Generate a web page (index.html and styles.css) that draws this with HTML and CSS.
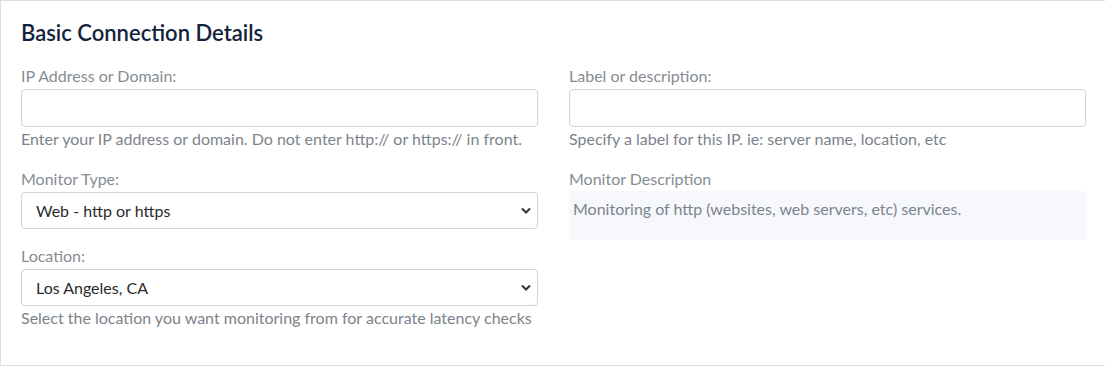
FILE: index.html
```html
<!DOCTYPE html>
<html lang="en">
<head>
  <meta charset="UTF-8" />
  <title>Basic Connection Details</title>
  <link rel="stylesheet" href="styles.css">
</head>
<body>
  <div class="card">
    <h2 class="card-title">Basic Connection Details</h2>

    <div class="form-grid">
      <!-- left column -->
      <div class="col">
        <div class="field">
          <label for="host">IP Address or Domain:</label>
          <input type="text" id="host" class="form-control">
          <small class="help">Enter your IP address or domain. Do not enter http:// or https:// in front.</small>
        </div>

        <div class="field">
          <label for="type">Monitor Type:</label>
          <select id="type" class="form-control">
            <option>Web - http or https</option>
          </select>
        </div>

        <div class="field">
          <label for="location">Location:</label>
          <select id="location" class="form-control">
            <option>Los Angeles, CA</option>
          </select>
          <small class="help">Select the location you want monitoring from for accurate latency checks</small>
        </div>
      </div>

      <!-- right column -->
      <div class="col">
        <div class="field">
          <label for="label">Label or description:</label>
          <input type="text" id="label" class="form-control">
          <small class="help">Specify a label for this IP. ie: server name, location, etc</small>
        </div>

        <div class="field">
          <label class="plain">Monitor Description</label>
          <div class="desc-box">Monitoring of http (websites, web servers, etc) services.</div>
        </div>
      </div>
    </div>
  </div>
</body>
</html>
```

FILE: styles.css
```css
body {
  margin: 0;
  font-family: Lato, "Open Sans", sans-serif;
  background: #fff;
  overflow: hidden;
}

.card {
  width: 1106px;
  height: 366px;
  box-sizing: border-box;
  border: 1px solid #dcdcdc;
  padding: 18px 20px 0 20px;
}

.card-title {
  margin: 0 0 18px;
  font-size: 22px;
  font-weight: 600;
  color: #14233c;
  line-height: 28px;
}

.form-grid {
  display: grid;
  grid-template-columns: 517px 517px;
  column-gap: 31px;
}

.field {
  display: flex;
  flex-direction: column;
  margin-bottom: 16px;
}

.field label {
  font-size: 16px;
  color: #878c94;
  line-height: 22px;
  margin-bottom: 2px;
}

.field label.plain {
  margin-bottom: 1px;
}

.form-control {
  height: 38px;
  box-sizing: border-box;
  border: 1px solid #ced4da;
  border-radius: 4px;
  padding: 0 16px;
  font-family: Lato, "Open Sans", sans-serif;
  font-size: 16px;
  color: #2b2b2b;
  background: #fff;
}

select.form-control {
  height: 37px;
  padding-left: 14px;
  appearance: none;
  background-image: url("data:image/svg+xml,%3Csvg xmlns='http://www.w3.org/2000/svg' width='10' height='7' viewBox='0 0 10 7'%3E%3Cpath d='M1 1.5l4 4 4-4' fill='none' stroke='%23333' stroke-width='2'/%3E%3C/svg%3E");
  background-repeat: no-repeat;
  background-position: right 6px center;
}

.help {
  font-size: 16px;
  color: #7d838b;
  line-height: 24px;
  margin-bottom: 1px;
}

.desc-box {
  height: 49px;
  background: #f6f8fd;
  color: #7d838b;
  font-size: 16px;
  line-height: 24px;
  padding: 6px 4px;
  box-sizing: border-box;
}
```
